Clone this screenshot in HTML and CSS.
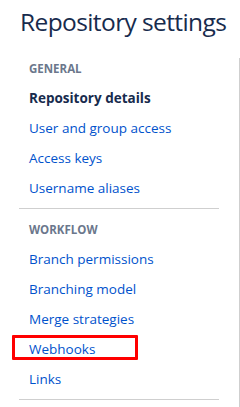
FILE: index.html
```html
<!DOCTYPE html>
<html>
<head>
<meta charset="utf-8">
<link rel="stylesheet" href="styles.css">
</head>
<body>
<div class="page">
  <h1 class="title">Repository settings</h1>
  <nav class="nav">
    <section class="group group-first">
      <h2 class="group-heading">GENERAL</h2>
      <ul class="items">
        <li class="item item-active">Repository details</li>
        <li class="item"><a href="#">User and group access</a></li>
        <li class="item"><a href="#">Access keys</a></li>
        <li class="item"><a href="#">Username aliases</a></li>
      </ul>
    </section>
    <section class="group">
      <h2 class="group-heading">WORKFLOW</h2>
      <ul class="items">
        <li class="item"><a href="#">Branch permissions</a></li>
        <li class="item"><a href="#">Branching model</a></li>
        <li class="item"><a href="#">Merge strategies</a></li>
        <li class="item item-marked"><a href="#">Webhooks</a></li>
        <li class="item"><a href="#">Links</a></li>
      </ul>
    </section>
  </nav>
</div>
</body>
</html>
```

FILE: styles.css
```css
html, body {
  margin: 0;
  padding: 0;
  background: #ffffff;
}
body {
  font-family: "Open Sans", "Noto Sans", sans-serif;
  color: #172b4d;
  width: 240px;
  height: 407px;
  overflow: hidden;
}
.title {
  margin: 0;
  height: 58px;
  box-sizing: border-box;
  padding: 5px 0 0 20px;
  font-size: 24.5px;
  font-weight: 400;
  line-height: 34px;
  letter-spacing: -0.6px;
  color: #172b4d;
  white-space: nowrap;
}
.nav {
  width: 239px;
  border-right: 1px solid #cfcfcf;
  height: 349px;
}
.group {
  margin-left: 19px;
  width: 200px;
  padding-top: 10px;
  padding-bottom: 5px;
  border-bottom: 1px solid #cfcfcf;
}
.group-first {
  padding-top: 0;
}
.group-heading {
  margin: 0 0 4px 0;
  padding-left: 10px;
  font-size: 11.5px;
  line-height: 21px;
  font-weight: 700;
  color: #6b778c;
}
.items {
  list-style: none;
  margin: 0;
  padding: 0;
}
.item {
  position: relative;
  height: 30px;
  line-height: 30px;
  padding-left: 10px;
  font-size: 13.5px;
  white-space: nowrap;
}
.item a {
  color: #0052cc;
  text-decoration: none;
}
.item-active {
  font-weight: 700;
  color: #172b4d;
}
.item-marked::after {
  content: "";
  position: absolute;
  left: -7px;
  top: 1px;
  width: 120px;
  height: 19px;
  border: 3px solid #ff0000;
  border-radius: 1px;
}
```
